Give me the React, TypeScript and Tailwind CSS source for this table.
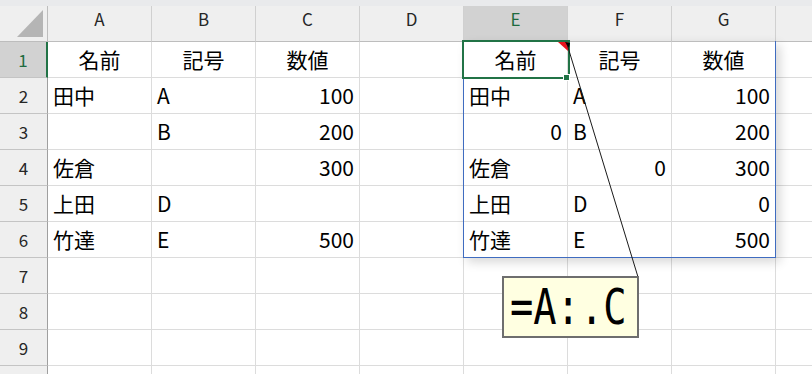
import React from "react";

type Cell = { t: string; a?: "l" | "r" | "c" };

const cols = ["A", "B", "C", "D", "E", "F", "G", "H"];

const data: Cell[][] = [
  [
    { t: "名前", a: "c" }, { t: "記号", a: "c" }, { t: "数値", a: "c" }, { t: "" },
    { t: "名前", a: "c" }, { t: "記号", a: "c" }, { t: "数値", a: "c" }, { t: "" },
  ],
  [
    { t: "田中" }, { t: "A" }, { t: "100", a: "r" }, { t: "" },
    { t: "田中" }, { t: "A" }, { t: "100", a: "r" }, { t: "" },
  ],
  [
    { t: "" }, { t: "B" }, { t: "200", a: "r" }, { t: "" },
    { t: "0", a: "r" }, { t: "B" }, { t: "200", a: "r" }, { t: "" },
  ],
  [
    { t: "佐倉" }, { t: "" }, { t: "300", a: "r" }, { t: "" },
    { t: "佐倉" }, { t: "0", a: "r" }, { t: "300", a: "r" }, { t: "" },
  ],
  [
    { t: "上田" }, { t: "D" }, { t: "" }, { t: "" },
    { t: "上田" }, { t: "D" }, { t: "0", a: "r" }, { t: "" },
  ],
  [
    { t: "竹達" }, { t: "E" }, { t: "500", a: "r" }, { t: "" },
    { t: "竹達" }, { t: "E" }, { t: "500", a: "r" }, { t: "" },
  ],
];

const font = { fontFamily: '"Noto Sans CJK JP", "Noto Sans", sans-serif' };

export default function App() {
  const rows = Array.from({ length: 10 }, (_, i) => i + 1);

  return (
    <div
      className="relative w-[812px] h-[374px] overflow-hidden bg-white text-black"
      style={font}
    >
      {/* top strip */}
      <div className="h-[6px] bg-[#e9eaec]" />

      {/* column headers */}
      <div className="flex h-9">
        <div className="relative w-[48px] shrink-0 h-9 bg-[#efefef] border-r border-b border-[#bdbdbd]">
          <svg className="absolute inset-0" width="48" height="36">
            <polygon points="17,31 43,31 43,4" fill="#b5b5b5" />
          </svg>
        </div>
        {cols.map((c) => (
          <div
            key={c}
            className={`w-[104px] shrink-0 h-9 flex justify-center items-center pb-[9px] text-[17px] border-r border-b border-r-[#d0d0d0] border-b-[#bdbdbd] ${
              c === "E" ? "bg-[#d2d2d2] text-[#1e6b3f]" : "bg-[#efefef] text-[#262626]"
            }`}
          >
            {/* H is off-screen in the shot, keep the header cell only */}
            {c === "H" ? "" : c}
          </div>
        ))}
      </div>

      {/* rows */}
      {rows.map((r) => (
        <div key={r} className="flex h-9">
          <div
            className={`w-[48px] shrink-0 h-9 flex items-center justify-center text-[17px] border-b border-b-[#c4c4c4] ${
              r === 1
                ? "bg-[#d2d2d2] text-[#1e6b3f] border-r-2 border-r-[#217346]"
                : "bg-[#efefef] text-[#262626] border-r border-r-[#9f9f9f]"
            }`}
          >
            {r < 10 ? r : ""}
          </div>
          {cols.map((c, ci) => {
            const cell = data[r - 1]?.[ci] ?? { t: "" };
            const align =
              cell.a === "r" ? "justify-end" : cell.a === "c" ? "justify-center" : "justify-start";
            return (
              <div
                key={c}
                className={`w-[104px] shrink-0 h-9 flex items-center px-[5px] text-[21px] leading-none border-r border-b border-[#dcdcdc] ${align}`}
              >
                {cell.t}
              </div>
            );
          })}
        </div>
      ))}

      {/* spill range border */}
      <div className="absolute left-[463px] top-[41px] w-[313px] h-[217px] border border-t-0 border-[#3f6cc0] shadow-[4px_4px_10px_rgba(0,0,0,0.16)] pointer-events-none" />

      {/* active cell E1 */}
      <div className="absolute left-[462px] top-[40px] w-[108px] h-[39px] border-2 border-[#217346] pointer-events-none" />
      <div className="absolute left-[563px] top-[74px] w-[7px] h-[7px] bg-[#217346] border border-white pointer-events-none" />

      {/* comment indicator + leader line */}
      <svg className="absolute inset-0 pointer-events-none" width="812" height="374">
        <polygon points="558,42 568,42 568,51" fill="#e8141c" />
        <line x1="567" y1="44" x2="638" y2="277" stroke="#1a1a1a" strokeWidth="1" />
        <polygon points="565,42 570,43 569,48" fill="#000" />
      </svg>

      {/* comment box */}
      <div className="absolute left-[502px] top-[276px] w-[137px] h-[62px] bg-[#ffffe1] border-2 border-[#6e6e6e] flex items-center pl-[6px] overflow-hidden">
        <span
          className="inline-block origin-left scale-x-[0.79] text-[49px] leading-none whitespace-nowrap text-black"
          style={{ fontFamily: '"DejaVu Sans Mono", "Liberation Mono", monospace' }}
        >
          =A:.C
        </span>
      </div>
    </div>
  );
}
